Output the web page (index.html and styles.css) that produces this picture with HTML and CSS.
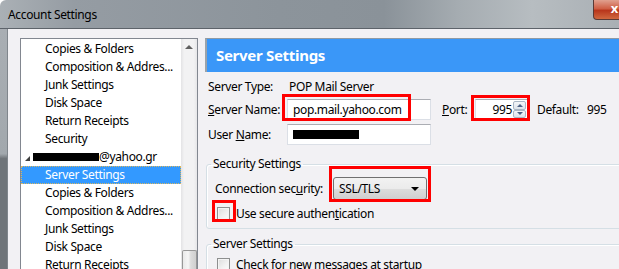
FILE: index.html
```html
<!DOCTYPE html>
<html lang="en">
<head>
  <meta charset="UTF-8">
  <title>Account Settings</title>
  <link rel="stylesheet" href="styles.css">
</head>
<body>
  <div class="window">
    <div class="titlebar">
      <span class="title">Account Settings</span>
      <div class="close-btn"><span>x</span></div>
    </div>
    <div class="frame">
      <div class="client">
        <!-- account tree -->
        <div class="tree">
          <ul class="tree-list">
            <li class="item">Copies &amp; Folders</li>
            <li class="item">Composition &amp; Addres...</li>
            <li class="item">Junk Settings</li>
            <li class="item">Disk Space</li>
            <li class="item">Return Receipts</li>
            <li class="item">Security</li>
            <li class="account"><span class="twisty"></span><span class="redacted"></span>@yahoo.gr</li>
            <li class="item selected">Server Settings</li>
            <li class="item">Copies &amp; Folders</li>
            <li class="item">Composition &amp; Addres...</li>
            <li class="item">Junk Settings</li>
            <li class="item">Disk Space</li>
            <li class="item">Return Receipts</li>
          </ul>
          <div class="scrollbar">
            <span class="arrow-up"></span>
            <span class="thumb"></span>
          </div>
        </div>

        <!-- settings pane -->
        <div class="pane">
          <div class="pane-header">Server Settings</div>
          <div class="server-form">
            <div class="form-row first">
              <span class="label">Server Type:</span>
              <span class="value">POP Mail Server</span>
            </div>
            <div class="form-row">
              <span class="label"><u>S</u>erver Name:</span>
              <span class="textbox">pop.mail.yahoo.com</span>
              <span class="port-label"><u>P</u>ort:</span>
              <span class="spinbox">
                <span class="spin-value">995</span>
                <span class="spin-buttons">
                  <span class="spin-btn up"></span>
                  <span class="spin-btn down"></span>
                </span>
              </span>
              <span class="default-label">Default:</span>
              <span>995</span>
            </div>
            <div class="form-row">
              <span class="label">User <u>N</u>ame:</span>
              <span class="textbox"><span class="redacted wide"></span></span>
            </div>
          </div>

          <fieldset class="group">
            <legend>Security Settings</legend>
            <div class="group-row">
              <span class="conn-label">Connection sec<u>u</u>rity:</span>
              <span class="dropdown">SSL/TLS<span class="drop-arrow"></span></span>
            </div>
            <label class="check-row">
              <span class="checkbox"></span>Use secure authen<u>t</u>ication
            </label>
          </fieldset>

          <fieldset class="group second">
            <legend>Server Settings</legend>
            <label class="check-row">
              <span class="checkbox"></span>Check for new messages at startup
            </label>
          </fieldset>
        </div>
      </div>
    </div>

    <!-- red highlight marks drawn over the screenshot -->
    <div class="mark mark-name"></div>
    <div class="mark mark-port"></div>
    <div class="mark mark-security"></div>
    <div class="mark mark-check"></div>
  </div>
</body>
</html>
```

FILE: styles.css
```css
* {
  margin: 0;
  padding: 0;
  box-sizing: border-box;
}
body {
  width: 619px;
  height: 269px;
  overflow: hidden;
  background: #fff;
  font-family: "Noto Sans", "Open Sans", sans-serif;
  font-size: 12px;
  letter-spacing: -0.35px;
  color: #000;
}
.window {
  position: relative;
  width: 619px;
  height: 269px;
  overflow: hidden;
  display: flex;
  flex-direction: column;
}
.titlebar {
  flex-shrink: 0;
  display: flex;
  align-items: flex-start;
  justify-content: space-between;
  height: 29px;
  border-top-left-radius: 6px;
  border-bottom: 1px solid #5d636a;
  background: linear-gradient(90deg, #aab0b5 0%, #959ca3 12%, #8c949b 45%, #8a9299 62%, #a5acb1 74%, #b7bdc1 86%, #a9afb4 100%);
}
.title {
  padding: 6px 0 0 8px;
  line-height: 18px;
}
.close-btn {
  width: 27px;
  height: 20px;
  margin-right: -1px;
  border: 1px solid #5a3a36;
  border-top: none;
  border-bottom-left-radius: 4px;
  background: linear-gradient(180deg, #e0a08f 0%, #cf5f45 45%, #b8361c 55%, #d0683f 100%);
  color: #fff;
  font-weight: bold;
  font-size: 13px;
  line-height: 17px;
  text-align: right;
  overflow: hidden;
}
.close-btn span {
  margin-right: 1px;
}
.frame {
  flex: 1;
  min-height: 0;
  overflow: hidden;
  display: flex;
  padding-left: 7px;
  background: linear-gradient(180deg, #a9aeb3 0%, #a2a8ad 52%, #6f7479 54%, #6f7479 100%);
}
.client {
  flex: 1;
  display: flex;
  align-items: flex-start;
  padding: 9px 0 0 12px;
  border-left: 1px solid #80868c;
  background: #f2f1f4;
}

/* tree */
.tree {
  display: flex;
  flex-shrink: 0;
  width: 178px;
  height: 240px;
  border: 1px solid #828790;
  border-bottom: none;
  background: #fff;
  overflow: hidden;
}
.tree-list {
  list-style: none;
  width: 160px;
  padding-top: 1px;
  overflow: hidden;
}
.tree-list li {
  height: 18px;
  line-height: 18px;
  white-space: nowrap;
}
.item {
  padding-left: 24px;
}
.item.selected {
  background: #3399ff;
  color: #fff;
  border: 1px dotted #d9b760;
  padding-left: 23px;
  line-height: 16px;
}
.account {
  display: flex;
  align-items: center;
  padding-left: 4px;
}
.twisty {
  width: 0;
  height: 0;
  margin-right: 3px;
  border-left: 5px solid transparent;
  border-bottom: 5px solid #404040;
  margin-top: 3px;
}
.redacted {
  display: inline-block;
  width: 66px;
  height: 8px;
  background: #000;
}
.redacted.wide {
  width: 66px;
  height: 9px;
}
.scrollbar {
  display: flex;
  flex-direction: column;
  justify-content: space-between;
  align-items: center;
  width: 16px;
  background: linear-gradient(90deg, #e3e3e5 0%, #f2f2f3 20%, #f2f2f3 80%, #e6e6e8 100%);
}
.arrow-up {
  width: 0;
  height: 0;
  margin-top: 6px;
  border-left: 4px solid transparent;
  border-right: 4px solid transparent;
  border-bottom: 4px solid #606060;
}
.thumb {
  width: 15px;
  height: 28px;
  border: 1px solid #979797;
  border-bottom: none;
  border-radius: 2px 2px 0 0;
  background: linear-gradient(90deg, #e9e9e9 0%, #f6f6f6 40%, #dcdcdc 60%, #cfcfcf 100%);
}

/* settings pane */
.pane {
  width: 440px;
  flex-shrink: 0;
  margin-left: 7px;
}
.pane-header {
  height: 34px;
  padding-left: 9px;
  border-top: 1px solid #8e9aa5;
  border-left: 2px solid #9aa3ab;
  background: #3a97f8;
  color: #fff;
  font-weight: bold;
  font-size: 15px;
  letter-spacing: -0.3px;
  line-height: 32px;
}
.server-form {
  padding: 5px 0 0 3px;
}
.form-row {
  display: flex;
  align-items: center;
  height: 21px;
  margin-top: 4px;
  white-space: nowrap;
}
.form-row.first {
  height: 18px;
  margin-top: 0;
}
.label {
  width: 79px;
}
.value {
  padding-left: 2px;
}
.textbox {
  display: flex;
  align-items: center;
  width: 144px;
  height: 21px;
  padding-left: 5px;
  border: 1px solid #dbdfe6;
  border-top-color: #abadb3;
  background: #fff;
}
.port-label {
  width: 33px;
  margin-left: 11px;
}
.spinbox {
  display: flex;
  align-items: stretch;
  width: 53px;
  height: 21px;
  padding: 1px;
  border: 1px solid #dbdfe6;
  border-top-color: #abadb3;
  background: #fff;
}
.spin-value {
  flex: 1;
  text-align: right;
  line-height: 17px;
  padding-right: 1px;
}
.spin-buttons {
  display: flex;
  flex-direction: column;
  width: 13px;
}
.spin-btn {
  flex: 1;
  display: flex;
  align-items: center;
  justify-content: center;
  border: 1px solid #a9b6c5;
  border-radius: 2px;
  background: linear-gradient(180deg, #f4f6f9, #dde3eb);
}
.spin-btn::after {
  content: "";
  border-left: 3px solid transparent;
  border-right: 3px solid transparent;
}
.spin-btn.up::after {
  border-bottom: 3px solid #4c6185;
}
.spin-btn.down::after {
  border-top: 3px solid #4c6185;
}
.default-label {
  width: 50px;
  margin-left: 9px;
}

/* group boxes */
.group {
  margin: 11px 0 0 1px;
  padding: 5px 8px 7px 8px;
  border: 1px solid #d5dfe5;
  border-radius: 3px;
  box-shadow: inset 1px 1px 0 #fff;
}
.group legend {
  margin-left: -4px;
  padding: 0 2px;
  line-height: 16px;
}
.group.second {
  margin-top: 7px;
  padding-top: 4px;
}
.group-row {
  display: flex;
  align-items: center;
  height: 23px;
}
.conn-label {
  width: 118px;
}
.dropdown {
  display: flex;
  align-items: center;
  justify-content: space-between;
  width: 94px;
  height: 23px;
  padding: 0 7px 0 5px;
  border: 1px solid #707070;
  border-radius: 3px;
  background: linear-gradient(180deg, #f2f2f2 0%, #ebebeb 50%, #dddddd 51%, #cfcfcf 100%);
}
.drop-arrow {
  border-left: 4px solid transparent;
  border-right: 4px solid transparent;
  border-top: 4px solid #000;
}
.check-row {
  display: flex;
  align-items: center;
  height: 16px;
  margin-top: 5px;
  white-space: nowrap;
}
.checkbox {
  width: 13px;
  height: 13px;
  margin: 0 6px 0 2px;
  border: 1px solid #8e8f8f;
  background: linear-gradient(135deg, #dcdcdc 0%, #f2f2f2 60%, #fbfbfb 100%);
  box-shadow: inset 0 0 0 1px #f4f4f4;
}
.group.second .check-row {
  margin-top: 0;
}

/* red annotation boxes */
.mark {
  position: absolute;
  border: 3px solid #f00;
}
.mark-name {
  left: 282px;
  top: 94px;
  width: 129px;
  height: 27px;
}
.mark-port {
  left: 471px;
  top: 95px;
  width: 59px;
  height: 26px;
}
.mark-security {
  left: 329px;
  top: 166px;
  width: 102px;
  height: 36px;
}
.mark-check {
  left: 212px;
  top: 200px;
  width: 24px;
  height: 22px;
}
```
